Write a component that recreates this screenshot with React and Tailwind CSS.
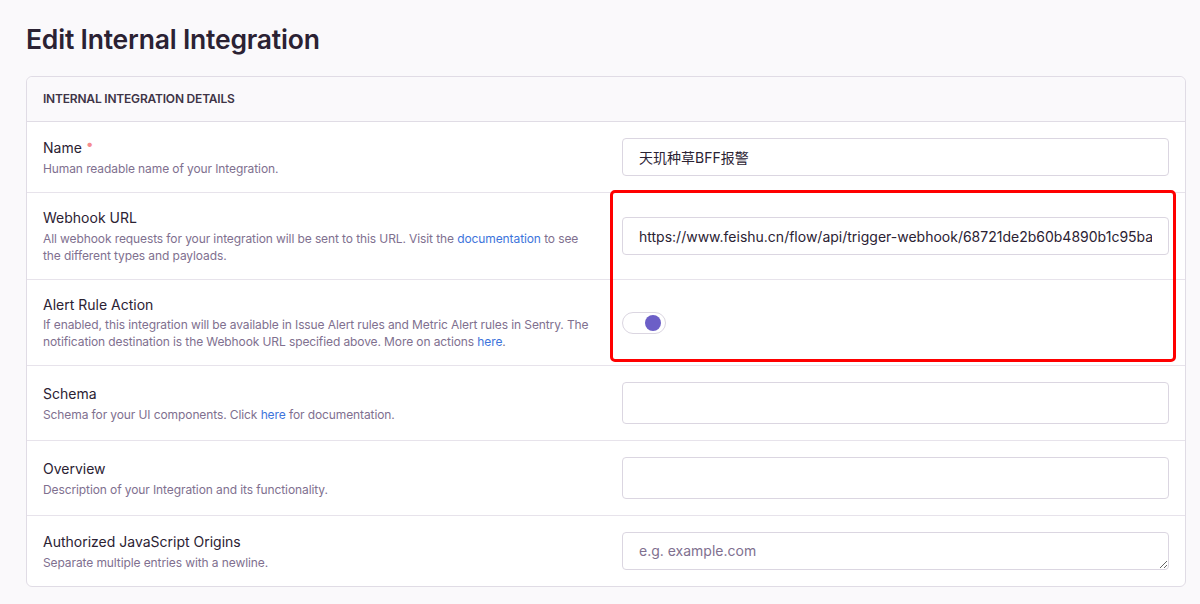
const font = { fontFamily: "Inter, 'Noto Sans CJK SC', sans-serif" };

function Row({ label, required, children, help, last, tight }) {
  return (
    <div className={`flex ${last ? "" : "border-b border-[#e7e3eb]"}`}>
      <div className="w-1/2 flex flex-col justify-center px-4 py-[15px]">
        <div className="text-[14px] leading-[20px] text-[#2b2233]">
          {label}
          {required && <span className="ml-1 text-[#f58c8f] relative -top-1">•</span>}
        </div>
        <div
          className={`text-[12px] leading-[17px] text-[#80708f] whitespace-nowrap tracking-[-0.1px] ${
            tight ? "mt-[1px]" : "mt-[2px]"
          }`}
        >
          {help}
        </div>
      </div>
      <div className="w-1/2 flex items-center px-4 py-4">{children}</div>
    </div>
  );
}

function TextInput({ value, placeholder, h = "h-[38px]" }) {
  return (
    <input
      readOnly
      value={value}
      placeholder={placeholder}
      className={`w-full ${h} rounded border border-[#dbd6e1] bg-white px-4 text-[14px] text-[#2b2233] placeholder:text-[#80708f] outline-none`}
      style={font}
    />
  );
}

function Link({ children }) {
  return <span className="text-[#3d74db]">{children}</span>;
}

export default function App() {
  return (
    <div className="min-h-screen bg-[#faf9fb] pl-[26px] pr-[14px] pt-[23px] h-[604px] overflow-hidden" style={font}>
      <h1 className="text-[26.5px] leading-[33px] font-semibold text-[#2b2233] tracking-[-0.2px]">
        Edit Internal Integration
      </h1>

      <div className="relative mt-[20px] rounded-md border border-[#e0dce5] bg-white">
        <div className="h-[45px] flex items-center px-4 bg-[#faf9fb] border-b border-[#e0dce5] rounded-t-md">
          <span className="text-[12px] font-semibold text-[#3e3446] uppercase tracking-[-0.2px]">
            Internal Integration Details
          </span>
        </div>

        <Row label="Name" required help="Human readable name of your Integration.">
          <TextInput value="天玑种草BFF报警" />
        </Row>

        <Row
          label="Webhook URL"
          help={
            <>
              All webhook requests for your integration will be sent to this URL. Visit the{" "}
              <Link>documentation</Link> to see
              <br />
              the different types and payloads.
            </>
          }
        >
          <TextInput value="https://www.feishu.cn/flow/api/trigger-webhook/68721de2b60b4890b1c95ba2e6a1b5c3" />
        </Row>

        <Row
          label="Alert Rule Action"
          tight
          help={
            <>
              If enabled, this integration will be available in Issue Alert rules and Metric Alert rules in Sentry. The
              <br />
              notification destination is the Webhook URL specified above. More on actions <Link>here</Link>.
            </>
          }
        >
          <div className="w-[44px] h-[22px] rounded-full border border-[#dbd6e1] bg-white flex items-center justify-end pr-[4px]">
            <div className="w-[16px] h-[16px] rounded-full bg-[#6c5fc7]" />
          </div>
        </Row>

        <Row
          label="Schema"
          help={
            <>
              Schema for your UI components. Click <Link>here</Link> for documentation.
            </>
          }
        >
          <TextInput value="" h="h-[42px]" />
        </Row>

        <Row label="Overview" help="Description of your Integration and its functionality.">
          <TextInput value="" h="h-[42px]" />
        </Row>

        <Row label="Authorized JavaScript Origins" help="Separate multiple entries with a newline." last>
          <textarea
            readOnly
            placeholder="e.g. example.com"
            className="w-full h-[38px] rounded border border-[#dbd6e1] bg-white px-4 py-[8px] text-[14px] leading-[20px] text-[#2b2233] placeholder:text-[#80708f] outline-none"
            style={font}
          />
        </Row>

        <div className="absolute left-[583px] top-[113px] w-[566px] h-[172px] border-[3px] border-[#ff0000] rounded-[5px] pointer-events-none" />
      </div>

      <div className="mt-[17px] h-[20px] rounded-t-md border border-[#e0dce5] bg-white" />
    </div>
  );
}
